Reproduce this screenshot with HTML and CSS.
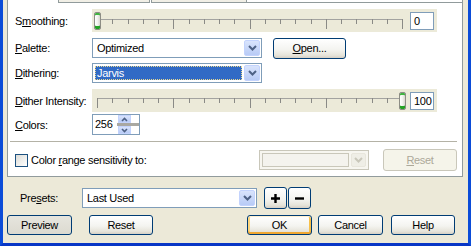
FILE: index.html
```html
<!DOCTYPE html>
<html lang="en">
<head>
    <meta charset="UTF-8">
    <title>Decrease Color Depth</title>
    <link rel="stylesheet" href="styles.css">
</head>
<body>
    <div class="dialog">
        <div class="panel">
            <div class="panel-top">
                <span class="pane pane-one"></span>
                <span class="pane pane-two"></span>
                <span class="pane-rest"></span>
            </div>

            <div class="row row-smooth">
                <span class="label">S<u>m</u>oothing:</span>
                <div class="slider">
                    <div class="track">
                        <svg class="ticks" width="316" height="23">
                            <path d="M5 10.5H311" stroke="#a3a3a0" fill="none"/>
                            <path d="M20.5 10v5M36.5 10v5M51.5 10v5M66.5 10v5M97.5 10v5M112.5 10v5M127.5 10v5M142.5 10v5M173.5 10v5M188.5 10v5M203.5 10v5M219.5 10v5M249.5 10v5M264.5 10v5M280.5 10v5M295.5 10v5" stroke="#8a8a86"/>
                            <path d="M5.5 10v10M81.5 10v10M158.5 10v10M234.5 10v10M310.5 10v10" stroke="#8a8a86"/>
                        </svg>
                        <span class="thumb" style="left: 2px"></span>
                    </div>
                    <span class="value">0</span>
                </div>
            </div>

            <div class="row row-palette">
                <span class="label"><u>P</u>alette:</span>
                <div class="combo">
                    <span class="combo-text">Optimized</span>
                    <span class="combo-btn">
                        <svg width="9" height="6"><path d="M1 1l3.5 3.5L8 1" stroke="#4d6185" stroke-width="2" fill="none"/></svg>
                    </span>
                </div>
                <button class="btn btn-open"><u>O</u>pen...</button>
            </div>

            <div class="row row-dither">
                <span class="label"><u>D</u>ithering:</span>
                <div class="combo">
                    <span class="combo-text selected">Jarvis</span>
                    <span class="combo-btn">
                        <svg width="9" height="6"><path d="M1 1l3.5 3.5L8 1" stroke="#4d6185" stroke-width="2" fill="none"/></svg>
                    </span>
                </div>
            </div>

            <div class="row row-intensity">
                <span class="label"><u>D</u>ither Intensity:</span>
                <div class="slider">
                    <div class="track">
                        <svg class="ticks" width="316" height="23">
                            <path d="M5 9.5H311" stroke="#a3a3a0" fill="none"/>
                            <path d="M20.5 9v5M36.5 9v5M51.5 9v5M66.5 9v5M97.5 9v5M112.5 9v5M127.5 9v5M142.5 9v5M173.5 9v5M188.5 9v5M203.5 9v5M219.5 9v5M249.5 9v5M264.5 9v5M280.5 9v5M295.5 9v5" stroke="#8a8a86"/>
                            <path d="M5.5 9v10M81.5 9v10M158.5 9v10M234.5 9v10" stroke="#8a8a86"/>
                        </svg>
                        <span class="thumb" style="left: 307px"></span>
                    </div>
                    <span class="value">100</span>
                </div>
            </div>

            <div class="row row-colors">
                <span class="label"><u>C</u>olors:</span>
                <div class="spin">
                    <span class="spin-text">256</span>
                    <span class="spin-bar"></span>
                    <span class="spin-btns">
                        <span class="spin-btn">
                            <svg width="7" height="5"><path d="M1 4l2.5-2.5L6 4" stroke="#4d6185" stroke-width="1.6" fill="none"/></svg>
                        </span>
                        <span class="spin-btn">
                            <svg width="7" height="5"><path d="M1 1l2.5 2.5L6 1" stroke="#4d6185" stroke-width="1.6" fill="none"/></svg>
                        </span>
                    </span>
                </div>
            </div>

            <div class="sep"></div>

            <div class="row row-check">
                <span class="checkbox"></span>
                <span class="check-label">Color <u>r</u>ange sensitivity to:</span>
                <div class="combo combo-disabled">
                    <span class="swatch"></span>
                    <span class="combo-btn">
                        <svg width="9" height="6"><path d="M1 1l3.5 3.5L8 1" stroke="#c9c7ba" stroke-width="2" fill="none"/></svg>
                    </span>
                </div>
                <button class="btn btn-disabled"><u>R</u>eset</button>
            </div>
        </div>

        <div class="presets">
            <span class="presets-label">Pre<u>s</u>ets:</span>
            <div class="combo combo-presets">
                <span class="combo-text">Last Used</span>
                <span class="combo-btn">
                    <svg width="9" height="6"><path d="M1 1l3.5 3.5L8 1" stroke="#4d6185" stroke-width="2" fill="none"/></svg>
                </span>
            </div>
            <button class="btn btn-icon">
                <svg width="9" height="9"><path d="M0 4.5h9M4.5 0v9" stroke="#000" stroke-width="2.4"/></svg>
            </button>
            <button class="btn btn-icon">
                <svg width="9" height="9"><path d="M0 4.5h9" stroke="#000" stroke-width="2.4"/></svg>
            </button>
        </div>

        <div class="actions">
            <button class="btn btn-preview">Preview</button>
            <button class="btn btn-reset">Reset</button>
            <div class="actions-right">
                <button class="btn btn-ok">OK</button>
                <button class="btn">Cancel</button>
                <button class="btn btn-help">Help</button>
            </div>
        </div>
    </div>
</body>
</html>
```

FILE: styles.css
```css
* {
    box-sizing: border-box;
}

body {
    font-family: 'Liberation Sans', Arial, sans-serif;
    font-size: 11px;
    letter-spacing: -0.3px;
    color: #000;
    background-color: #ece9d8;
    margin: 0;
}

u {
    text-decoration-thickness: 1px;
    text-underline-offset: 1px;
}

.dialog {
    width: 471px;
    height: 246px;
    background-color: #ece9d8;
    border-left: 3px solid #0b4cd8;
    border-right: 3px solid #0b4cd8;
    border-bottom: 3px solid #0836c6;
}

/* main group */

.panel {
    width: 456px;
    margin-left: 4px;
    background-color: #fff;
    border: 1px solid #919b9c;
    border-top: none;
    padding: 0 5px 5px 7px;
}

.panel-top {
    display: flex;
    height: 3px;
    margin: 0 -5px 0 -7px;
}

.pane {
    border: 1px solid #919b9c;
    border-top: none;
    background-color: #f1efe6;
}

.pane-one {
    width: 92px;
    margin-left: 50px;
}

.pane-two {
    width: 96px;
    margin-left: 1px;
}

.pane-rest {
    flex: 1;
    border-bottom: 1px solid #919b9c;
}

.row {
    display: flex;
    align-items: center;
}

.label {
    width: 77px;
    flex-shrink: 0;
}

.row-smooth {
    height: 23px;
    margin-top: 6px;
}

.row-palette {
    height: 22px;
    margin-top: 5px;
}

.row-dither {
    height: 20px;
    margin-top: 4px;
}

.row-intensity {
    height: 23px;
    margin-top: 6px;
}

.row-colors {
    height: 21px;
    margin-top: 2px;
}

.sep {
    margin: 6px 0 0 -5px;
    border-top: 1px solid #b4b2a6;
}

.row-check {
    height: 22px;
    margin-top: 7px;
}

/* trackbar */

.slider {
    display: flex;
    align-items: center;
    width: 345px;
    height: 23px;
    background-color: #ecead9;
}

.track {
    position: relative;
    width: 316px;
    height: 23px;
}

.ticks {
    display: block;
}

.thumb {
    position: absolute;
    top: 3px;
    width: 7px;
    height: 18px;
    border: 1px solid #8d8d85;
    border-radius: 2px;
    background: linear-gradient(to right, #fff, #f3f3ef 50%, #d8d6ce);
    box-shadow: inset 0 2px #41b541, inset 0 -3px #23a323;
}

.value {
    width: 24px;
    height: 18px;
    margin-left: 2px;
    border: 1px solid #7f9db9;
    background-color: #fff;
    padding-left: 3px;
    line-height: 16px;
}

/* combo boxes */

.combo {
    display: flex;
    align-items: stretch;
    width: 170px;
    height: 20px;
    border: 1px solid #7f9db9;
    background-color: #fff;
    padding: 1px;
}

.combo-text {
    flex: 1;
    padding-left: 3px;
    line-height: 16px;
}

.combo-text.selected {
    margin: 1px 2px 1px 1px;
    padding-left: 2px;
    line-height: 14px;
    background-color: #316ac5;
    color: #fff;
    outline: 1px dotted #e8d88e;
    outline-offset: -1px;
}

.combo-btn {
    display: flex;
    align-items: center;
    justify-content: center;
    width: 16px;
    border: 1px solid #c3d3fd;
    border-radius: 2px;
    background: linear-gradient(#d9e4fc, #b8cbf6);
}

.combo-disabled {
    width: 110px;
    margin-left: auto;
    border-color: #c9c7ba;
    background-color: #f7f6f0;
    padding: 2px;
}

.combo-disabled .swatch {
    flex: 1;
    border: 1px solid #c9c7ba;
    background-color: #f4f3ee;
    margin-right: 2px;
}

.combo-disabled .combo-btn {
    width: 15px;
    border-color: #e8e6dc;
    background: #efeee6;
}

.combo-presets {
    width: 175px;
}

/* spinner */

.spin {
    position: relative;
    width: 48px;
    height: 21px;
    border: 1px solid #7f9db9;
    background-color: #fff;
}

.spin-text {
    display: block;
    padding-left: 2px;
    line-height: 19px;
}

.spin-bar {
    position: absolute;
    left: 24px;
    right: 0;
    top: 8px;
    height: 3px;
    background-color: #a9a8a2;
}

.spin-btns {
    position: absolute;
    left: 25px;
    top: 0;
    bottom: 0;
    width: 13px;
    display: flex;
    flex-direction: column;
    justify-content: space-between;
}

.spin-btn {
    display: flex;
    align-items: center;
    justify-content: center;
    height: 8px;
    border: 1px solid #c3d3fd;
    background: linear-gradient(#d9e4fc, #b8cbf6);
}

/* checkbox row */

.checkbox {
    width: 13px;
    height: 13px;
    border: 1px solid #1c5180;
    background: linear-gradient(135deg, #dcdcd7, #fff);
}

.check-label {
    margin-left: 3px;
}

/* buttons */

.btn {
    font-family: inherit;
    font-size: 11px;
    letter-spacing: -0.3px;
    color: #000;
    height: 20px;
    padding: 0;
    border: 1px solid #003c74;
    border-radius: 3px;
    background: linear-gradient(#fff, #f4f4f0 55%, #e6e4da 85%, #d6d0c5);
}

.btn-open {
    width: 73px;
    height: 21px;
    margin-left: 11px;
}

.btn-disabled {
    width: 74px;
    height: 22px;
    margin-left: 14px;
    border-color: #c9c7ba;
    background: #f5f4ea;
    color: #aca899;
}

.btn-icon {
    display: flex;
    align-items: center;
    justify-content: center;
    width: 23px;
    height: 22px;
    margin-left: 1px;
}

.btn-icon:first-of-type {
    margin-left: 7px;
}

/* presets and dialog buttons */

.presets {
    display: flex;
    align-items: center;
    height: 22px;
    margin-top: 10px;
    padding-left: 17px;
}

.presets-label {
    width: 62px;
}

.actions {
    display: flex;
    margin-top: 6px;
    padding-left: 4px;
}

.actions .btn {
    width: 65px;
}

.btn-preview {
    background: linear-gradient(#e6e5de, #dcdad0);
}

.actions .btn-reset {
    width: 64px;
    margin-left: 17px;
}

.actions-right {
    display: flex;
    gap: 6px;
    margin-left: auto;
    margin-right: 13px;
}

.btn-ok {
    box-shadow: inset 0 1px #fff0cf, inset 0 -2px #f0a731, inset 2px 0 #fcd57d, inset -2px 0 #f7c04a;
}

.actions .btn-help {
    width: 64px;
    margin-left: 2px;
}
```
